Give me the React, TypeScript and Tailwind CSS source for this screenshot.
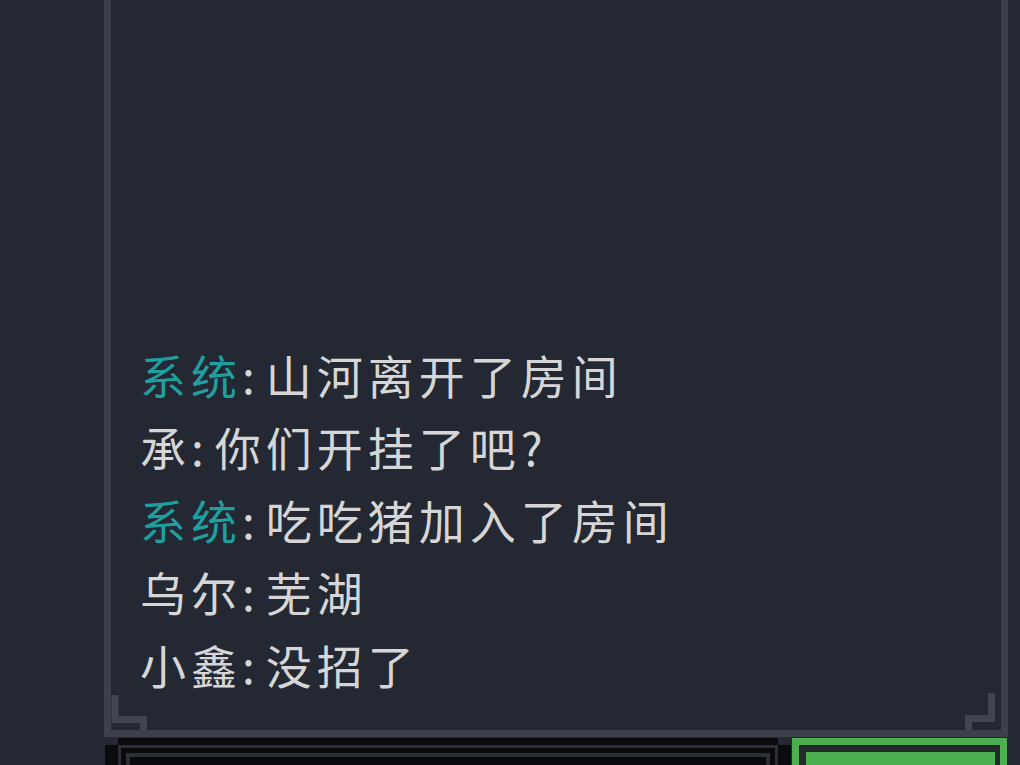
import { FC } from "react";

const messages: [string, string, boolean][] = [
	["系统", "山河离开了房间", true],
	["承", "你们开挂了吧?", false],
	["系统", "吃吃猪加入了房间", true],
	["乌尔", "芜湖", false],
	["小鑫", "没招了", false]
];

const ChatLine: FC<{ name: string; text: string; system: boolean }> = ({ name, text, system }) => (
	<div className="whitespace-nowrap">
		<span className={system ? "text-[#1f9f9f]" : "text-[#d6d6d6]"}>{name}</span>
		<span className="text-[#d6d6d6]">:</span>
		<span className="ml-[6px] text-[#d6d6d6]">{text}</span>
	</div>
);

// little stepped corner ornaments inside the chat frame
const Corners: FC = () => (
	<svg className="pointer-events-none absolute inset-0" width={890} height={730} fill="none" stroke="#41454f" strokeWidth={7}>
		<polyline points="4,695 4,719.5 32.5,719.5 32.5,730" />
		<polyline points="880.5,693 880.5,718.5 857.5,718.5 857.5,730" />
	</svg>
);

const InputBox: FC = () => (
	<div className="relative ml-[105px] h-[60px] w-[686px] bg-[#0b0b0d] p-[7px]">
		<div className="absolute left-0 top-0 h-[7px] w-[13px] bg-[#232833]" />
		<div className="absolute right-0 top-0 h-[7px] w-[13px] bg-[#232833]" />
		<div className="ml-[6px] mr-[6px] h-full border-l-[3px] border-r-[3px] border-t-[3px] border-[#2b2f38] bg-[#0b0b0d]">
			<div className="mx-[5px] mt-[5px] h-full border-l-[4px] border-r-[4px] border-t-[4px] border-[#2b2f38] bg-[#0b0b0d]" />
		</div>
	</div>
);

const SendButton: FC = () => (
	<div className="ml-[1px] h-[60px] w-[215px] border-[7px] border-[#4caf50] bg-[#232a2c] p-[7px] pr-[5px]">
		<div className="h-full bg-[#4caf50]" />
	</div>
);

export default function App() {
	return (
		<div
			className="h-[765px] w-[1020px] overflow-hidden bg-[#232833]"
			style={{ fontFamily: '"Noto Sans CJK SC", "Noto Sans", sans-serif' }}
		>
			<div className="relative ml-[104px] flex h-[737px] w-[904px] flex-col justify-end border-b-[7px] border-l-[7px] border-r-[7px] border-[#3c404b] pb-[30px] pl-[29px]">
				<Corners />
				<div className="text-[46px] leading-[72.5px] tracking-[5px]">
					{messages.map(([name, text, system], i) => (
						<ChatLine key={i} name={name} text={text} system={system} />
					))}
				</div>
			</div>
			<div className="mt-[1px] flex">
				<InputBox />
				<SendButton />
			</div>
		</div>
	);
}
